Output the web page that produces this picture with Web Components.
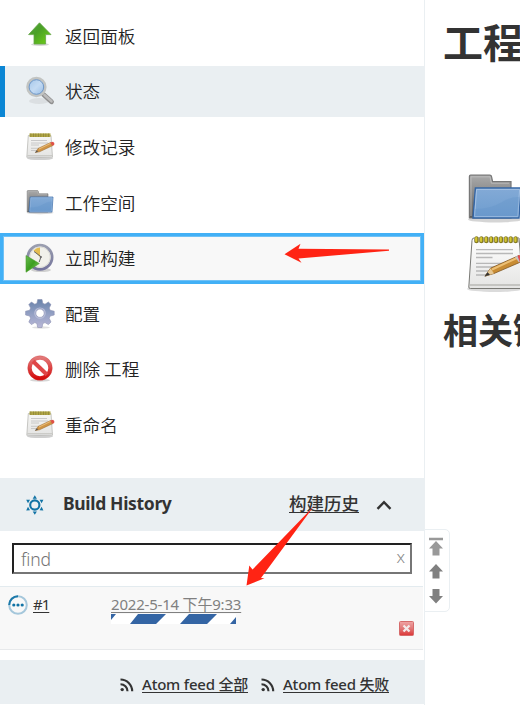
<!DOCTYPE html>
<html lang="zh-CN">
<head>
<meta charset="utf-8">
<title>工程</title>
<style>
html,body{margin:0;height:705px;overflow:hidden;background:#fff}
body{font-family:"Noto Sans","Noto Sans CJK SC",sans-serif;color:#333}
</style>
</head>
<body>
<job-page></job-page>
<script>
const ICONS = {
up:`<ellipse cx="15" cy="23.5" rx="9" ry="1.5" fill="#999" opacity=".4"/><path d="M14.5 1.8 26 13.6H20.6V23H9V13.6H3.6Z" fill="url(#g)" stroke="#65a646" stroke-width=".8"/><defs><linearGradient id="g" x2="1" y2="1"><stop stop-color="#57a344"/><stop offset=".4" stop-color="#4aa027"/><stop offset="1" stop-color="#73d216"/></linearGradient></defs>`,
search:`<ellipse cx="14" cy="25" rx="10" ry="3" fill="#aaa" opacity=".22"/><path d="M18.5 18.5 26.5 25.8" stroke="#8f8f8f" stroke-width="4.8" stroke-linecap="round"/><path d="M19.5 19 26.5 25.3" stroke="#bcbcbc" stroke-width="2.6" stroke-linecap="round"/><circle cx="11.4" cy="11" r="8.9" fill="url(#g)" stroke="#c2c4c2" stroke-width="2.6"/><circle cx="11.4" cy="11" r="7.3" fill="none" stroke="#6f97c6" stroke-width="1"/><defs><linearGradient id="g" x2="1" y2="1"><stop stop-color="#9fc3e9"/><stop offset=".5" stop-color="#c4dbf3"/><stop offset="1" stop-color="#8fb8e4"/></linearGradient></defs>`,
note:`<ellipse cx="15" cy="26.6" rx="13" ry="1.5" fill="#888" opacity=".4"/><path d="M3.3 3.5H26L27.5 25.3H1.8Z" fill="url(#g)" stroke="#b0b0ac" stroke-width=".7"/><path d="M2.3 23.6H27" stroke="#c8c8c4"/><rect x="4.5" y="1.4" width="21" height="3.6" fill="#b0a645"/><path d="M5.5 3.2H25" stroke="#8b8238" stroke-width="3.6" stroke-dasharray=".7 1.8"/><path d="M6 8.5H22M6 11H23M6 13H14M6 16.3H15M6 18.5H12" stroke="#c4c4c4" stroke-width=".9"/><path d="M10.5 20.5 13 16.5 25.5 10.5 28 13.5 14.5 19.8Z" fill="#cf9445" stroke="#986728" stroke-width=".5"/><path d="M14 17 25.5 11.4" stroke="#edc483" stroke-width=".9"/><path d="M25.2 10.5 28 9.8Q30 10.6 29.2 12.9L27.4 13.8Z" fill="#df5148"/><path d="M9.8 20.8 12 18.2 13 19.7Z" fill="#555"/><defs><linearGradient id="g" x2="0" y2="1"><stop stop-color="#f6f6f4"/><stop offset="1" stop-color="#e4e4e3"/></linearGradient></defs>`,
notebig:`<ellipse cx="30" cy="57" rx="28" ry="3" fill="#888" opacity=".3"/><path d="M7 8.5Q7 6 9 6H54L58 55Q58 56.5 56 56.5H5.5Q3.6 56.5 3.8 55Z" fill="url(#g)" stroke="#797975" stroke-width="1"/><path d="M5 53H58" stroke="#b9b9b5" stroke-width="1.4"/><path d="M9 8.5H54" stroke="#b8b8b0" stroke-width="4"/><path d="M11.5 6.3V9.3M16.4 6.3V9.3M21.3 6.3V9.3M26.2 6.3V9.3M31.1 6.3V9.3M36 6.3V9.3M40.9 6.3V9.3M45.8 6.3V9.3M50.7 6.3V9.3" stroke="#857b20" stroke-width="4" stroke-linecap="round"/><path d="M11.2 6V9M16.1 6V9M21 6V9M25.9 6V9M30.8 6V9M35.7 6V9M40.6 6V9M45.5 6V9M50.4 6V9" stroke="#d5c630" stroke-width="2.2" stroke-linecap="round"/><path d="M11 17.7H48M11 21.5H48M11 25.5H27.5M11 31.3H48M11 35H42M11 39H30M11 43H23" stroke="#b8b8b8" stroke-width="1.3"/><path d="M20 44.2 25.5 36.2 54 23.5 58 29 29 41.5Z" fill="#c88c34" stroke="#80551f" stroke-width=".8"/><path d="M27 37.5 54 25" stroke="#edc075" stroke-width="2"/><path d="M20 44.2 25.5 36.2 29 41.5Z" fill="#e6c690"/><path d="M19.5 44.5 22.5 40.2 25 42.8Z" fill="#333"/><path d="M50 25 53 23.5 57 29 54 30.5Z" fill="#c4c4c4"/><path d="M52.5 24 60 21V29L55 30.5Z" fill="#e24c50"/><defs><linearGradient id="g" x2="0" y2="1"><stop stop-color="#fff"/><stop offset="1" stop-color="#e4e4e3"/></linearGradient></defs>`,
folder:`<ellipse cx="15" cy="24.8" rx="13.5" ry="1.4" fill="#888" opacity=".35"/><path d="M2.2 24V3.2Q2.2 2.6 2.8 2.6H12.4Q13.2 2.6 13.3 3.4L13.8 5.8H23V24Z" fill="url(#b)" stroke="#777" stroke-width=".6"/><path d="M3 23V3.4H12.5L13.2 6.6H22" fill="none" stroke="#c0c0c0" stroke-width=".4"/><path d="M5.2 9H28L27 24H4Z" fill="url(#g)" stroke="#3465a4" stroke-width=".7"/><path d="M5.8 9.7H27.3L26.4 23.3H4.8Z" fill="none" stroke="#a4c1e3" stroke-width=".5"/><path d="M5 19.5Q13 19.5 18 16.3T27.2 13.5L26.4 23.3H4.7Z" fill="#5f91c8" opacity=".3"/><defs><linearGradient id="g" x2="0" y2="1"><stop stop-color="#83aad6"/><stop offset="1" stop-color="#6d9ccf"/></linearGradient><linearGradient id="b" x2="0" y2="1"><stop stop-color="#aaa"/><stop offset="1" stop-color="#5d5d5d"/></linearGradient></defs>`,
clock:`<ellipse cx="16" cy="27" rx="10" ry="2" fill="#888" opacity=".35"/><circle cx="15" cy="14.2" r="12.1" fill="#f1f1eb" stroke="url(#g)" stroke-width="2.8"/><circle cx="15" cy="14.2" r="10.2" fill="none" stroke="#d5d5d0" stroke-width=".8"/><path d="M15 14 8.5 7.4Q11.5 4.6 15 4.5Z" fill="#e4bd50"/><path d="M9 8.5 16 13.7 14.2 19" fill="none" stroke="#666" stroke-width="1"/><circle cx="15.8" cy="14" r="1.1" fill="#666"/><path d="M1 12.5 14.3 20.5 1 29.2Z" fill="url(#a)" stroke="#4e9a2c" stroke-width=".6"/><defs><linearGradient id="g" x2="0" y2="1"><stop stop-color="#9b9fb0"/><stop offset="1" stop-color="#74749c"/></linearGradient><linearGradient id="a" x2="1" y2="1"><stop stop-color="#69bd51"/><stop offset=".5" stop-color="#3c9e20"/><stop offset="1" stop-color="#8bd66a"/></linearGradient></defs>`,
gear:`<ellipse cx="16" cy="28.5" rx="9" ry="1.2" fill="#999" opacity=".3"/><path fill-rule="evenodd" d="M12.7.5H17L17.8 4.3 20 5.2 23.4 3 26 5.6 24.2 9 25.2 11.3 29.2 12.2V16L25.2 17 24.2 19.3 26 23 23.4 25.6 20 23.6 17.8 24.5 17 28.5H12.7L11.9 24.5 9.8 23.6 6.4 25.6 3.8 23 5.6 19.3 4.7 17 .6 16V12.2L4.7 11.3 5.6 9 3.8 5.6 6.4 3 9.8 5.2 11.9 4.3ZM15 10A4.2 4.2 0 1 0 15 18.4 4.2 4.2 0 1 0 15 10Z" fill="url(#g)" stroke="#8c91b2" stroke-width=".6"/><circle cx="15" cy="14.2" r="5.2" fill="none" stroke="#b8bdd8" stroke-width="1.2"/><defs><linearGradient id="g" x2="0" y2="1"><stop stop-color="#6781a9"/><stop offset=".45" stop-color="#8e9dc1"/><stop offset="1" stop-color="#b9b7d7"/></linearGradient></defs>`,
no:`<ellipse cx="15" cy="26.2" rx="10" ry="1.5" fill="#888" opacity=".35"/><circle cx="15" cy="14" r="10.3" fill="#fff" stroke="url(#g)" stroke-width="4"/><path d="M8 7.2 22 20.8" stroke="#df4647" stroke-width="4"/><circle cx="15" cy="14" r="12.3" fill="none" stroke="#c83232" stroke-width=".5" opacity=".6"/><defs><linearGradient id="g" x2="0" y2="1"><stop stop-color="#e27878"/><stop offset=".5" stop-color="#dc4444"/><stop offset="1" stop-color="#d40d0d"/></linearGradient></defs>`
};
const CJK = '"Noto Sans","Noto Sans CJK SC",sans-serif';
function define(name, html, after){
  customElements.define(name, class extends HTMLElement{
    constructor(){ super(); this.attachShadow({mode:'open'}).innerHTML = html; }
    connectedCallback(){ if(after) after(this, this.shadowRoot); }
  });
}
define('ui-icon', `<style>:host{display:block;flex:none;width:30px;height:30px}:host([large]){width:60px;height:60px}svg{display:block;width:100%;height:100%;overflow:visible}</style><svg></svg>`, (el,root)=>{
  const n = el.getAttribute('name');
  const s = root.querySelector('svg');
  s.setAttribute('viewBox', n==='notebig' ? '0 0 60 60' : '0 0 30 30');
  s.innerHTML = ICONS[n];
});
define('task-item', `<style>
:host{display:flex;box-sizing:border-box;height:51px;align-items:center;padding-left:25px;gap:10px;font:350 17.6px/26px "Noto Sans CJK SC",sans-serif;color:#222}
:host([active]){background:#eaeff2;border-left:5px solid #0b86d4;padding-left:20px}
:host([focused]){background:#f8f8f8;border:4px solid #42b0f6;border-width:3px 3px 3px 3px;padding-left:22px;box-shadow:inset 0 0 0 1px #6fc1f6}
span{white-space:nowrap}
</style><div></div><span><slot></slot></span>`, (el,root)=>{
  const icon = document.createElement('ui-icon');
  icon.setAttribute('name', el.getAttribute('icon'));
  root.querySelector('div').replaceWith(icon);
});
define('task-list', `<style>:host{display:flex;flex-direction:column;gap:4.57px;padding-top:10.4px;height:478px;box-sizing:border-box}</style><slot></slot>`);
define('history-header', `<style>
:host{display:flex;box-sizing:border-box;height:53px;background:#eaeff2;padding:0 32px 0 25px;align-items:center}
.w{width:20px;height:20px;margin-top:1px}
b{font:700 17.5px/24px ${CJK};letter-spacing:-.33px;margin-left:18px;margin-top:-3px;flex:1;color:#333;white-space:nowrap}
a{font:500 17.5px/24px ${CJK};text-decoration:underline;text-underline-offset:2px;margin-right:17px;margin-top:-3px}
</style>
<svg class="w" viewBox="0 0 20 20" fill="#1173a5"><circle cx="9.8" cy="10" r="4.6" fill="none" stroke="#1173a5" stroke-width="2.1"/><path d="M9.8.2 11.9 3.7H7.7ZM9.8 19.8 11.9 16.6H7.7ZM1.2 4.7 5 4.8 3 8.2ZM18.4 4.7 14.6 4.8 16.6 8.2ZM1.2 15.4 5 15.2 3 11.8ZM18.4 15.4 14.6 15.2 16.6 11.8Z"/></svg>
<b>Build History</b><a>构建历史</a>
<svg width="16" height="12" viewBox="0 0 16 12"><path d="M1.5 9.8 8 3.2 14.5 9.8" fill="none" stroke="#333" stroke-width="2.4"/></svg>`);
define('find-box', `<style>
:host{display:flex;padding:12px 12px 12px;height:31px}
div{display:flex;box-sizing:border-box;flex:1;height:31px;border:2px solid;border-color:#222 #767676 #767676 #222;align-items:center;justify-content:space-between;padding:0 5px 0 7px;font:350 17.5px/24px "Noto Sans",sans-serif;color:#757575}
i{font:300 17px/20px "Noto Sans",sans-serif;color:#888;margin-top:-3px}
span{margin-top:1px;letter-spacing:-.1px}
</style><div><span>find</span><i>x</i></div>`);
define('build-row', `<style>
:host{display:flex;box-sizing:border-box;height:64px;border-top:1px solid #e3ebef;border-bottom:1px solid #e7e9eb;background:#f8f8f8;padding-left:8px;margin-right:1px}
.s{width:20px;height:20px;margin-top:7.5px;flex:none}
a{font:15px/20px ${CJK};letter-spacing:-.2px;text-decoration:underline;text-underline-offset:2px;color:#333;white-space:nowrap}
.n{width:78px;margin:7px 0 0 5px;letter-spacing:-1px}
.d{flex:1;margin-top:7px}
.d a{display:block;color:#808080;width:max-content}
.bar{display:block}
.x{margin:34px 9px 0 0}
</style>
<svg class="s" viewBox="0 0 20 20"><circle cx="10" cy="10" r="8.8" fill="none" stroke="#a5c7db" stroke-width="2"/><path d="M1.2 10A8.8 8.8 0 0 1 10 1.2" fill="none" stroke="#1c79a9" stroke-width="2"/><g fill="#1173a5"><circle cx="5.8" cy="10" r="1.6"/><circle cx="10" cy="10" r="1.6"/><circle cx="14.2" cy="10" r="1.6"/></g></svg>
<a class="n">#1</a>
<div class="d"><a>2022-5-14 下午9:33</a><svg class="bar" width="125" height="10"><rect width="125" height="10" fill="#fff"/><path d="M0 0H5L0 6ZM27 0H55L45 10H19ZM78 0H106L96 10H69ZM125 3V10H119Z" fill="#3465a4"/></svg></div>
<svg class="x" width="15" height="15" viewBox="0 0 15 15"><defs><linearGradient id="r" x2="0" y2="1"><stop stop-color="#efa5a5"/><stop offset=".5" stop-color="#e17777"/><stop offset="1" stop-color="#dc3535"/></linearGradient></defs><rect x=".5" y=".5" width="14" height="14" rx="1" fill="url(#r)" stroke="#d66b6b"/><path d="M4.5 4.5 10.5 10.5M10.5 4.5 4.5 10.5" stroke="#f3e9e9" stroke-width="2.3"/></svg>`);
define('feed-link', `<style>
:host{display:flex;gap:8px;align-items:center}
a{font:500 15px/20px ${CJK};letter-spacing:-.22px;text-decoration:underline;text-underline-offset:2px;color:#333;white-space:nowrap}
svg{margin-top:2px}
</style><svg width="14" height="14" viewBox="0 0 14 14"><circle cx="2.2" cy="11.6" r="1.7" fill="#333"/><path d="M.5 6.2A7 7 0 0 1 7.5 13.2M.5 1.5A11.7 11.7 0 0 1 12.2 13.2" fill="none" stroke="#333" stroke-width="2.1"/></svg><a><slot></slot></a>`);
define('feed-bar', `<style>:host{display:flex;box-sizing:border-box;height:44px;margin-top:10px;padding:3px 35px 0 0;background:#eaeff2;justify-content:flex-end;gap:13px}</style><slot></slot>`);
define('side-panel', `<style>:host{display:block;box-sizing:border-box;width:425px;height:705px;border-right:1px solid #eaeff2;flex:none}</style>
<task-list><task-item icon="up">返回面板</task-item><task-item icon="search" active>状态</task-item><task-item icon="note">修改记录</task-item><task-item icon="folder">工作空间</task-item><task-item icon="clock" focused>立即构建</task-item><task-item icon="gear">配置</task-item><task-item icon="no">删除 工程</task-item><task-item icon="note">重命名</task-item></task-list>
<history-header></history-header><find-box></find-box><build-row></build-row>
<feed-bar><feed-link>Atom feed 全部</feed-link><feed-link>Atom feed 失败</feed-link></feed-bar>`);
define('main-panel', `<style>
:host{display:block;padding-left:18px;width:77px;overflow:hidden;height:705px}
h1,h2{margin:0;white-space:nowrap;color:#333;font-family:"Noto Sans CJK SC",sans-serif;font-weight:700}
h1{font-size:40px;line-height:60px;padding-top:11px}
h2{font-size:35px;line-height:50px;margin-top:12px}
.l{display:flex;flex-direction:column;gap:2px;margin:99px 0 0 22px}
</style><h1>工程</h1><div class="l"><ui-icon large name="folder"></ui-icon><ui-icon large name="notebig"></ui-icon></div><h2>相关链接</h2>`);
define('page-nav', `<style>
:host{position:absolute;left:424px;top:529px;width:26px;height:83px;box-sizing:border-box;border:1px solid #eaeff2;border-radius:0 5px 5px 0;background:#fff;display:flex;flex-direction:column;align-items:center;padding:7px 2px 0 0}
</style><svg width="16" height="70" viewBox="0 0 16 70"><path d="M1 .8H15V3.3H1ZM8 4 15 11.5H11.5V18.5H4.5V11.5H1Z" fill="#999"/><path d="M8 27 15 34.5H11.5V41.5H4.5V34.5H1ZM8 66.5 15 59H11.5V52H4.5V59H1Z" fill="#808080"/></svg>`);
define('pointer-marks', `<style>:host{position:absolute;left:0;top:0;pointer-events:none}svg{display:block}</style>
<svg width="520" height="705" fill="#ff2414"><path d="M284.5 254.3 300.5 243.8 298.5 248.7 389 249.5 389 250.7 298.5 258.5 301.5 262.7Z"/><path d="M314 506 261 578 264.5 578.3 246.5 585.5 249.3 565.5 252.5 569.5Z"/></svg>`);
define('job-page', `<style>:host{display:flex;position:relative;width:520px;height:705px;overflow:hidden}</style><side-panel></side-panel><main-panel></main-panel><page-nav></page-nav><pointer-marks></pointer-marks>`);
</script>
</body>
</html>
